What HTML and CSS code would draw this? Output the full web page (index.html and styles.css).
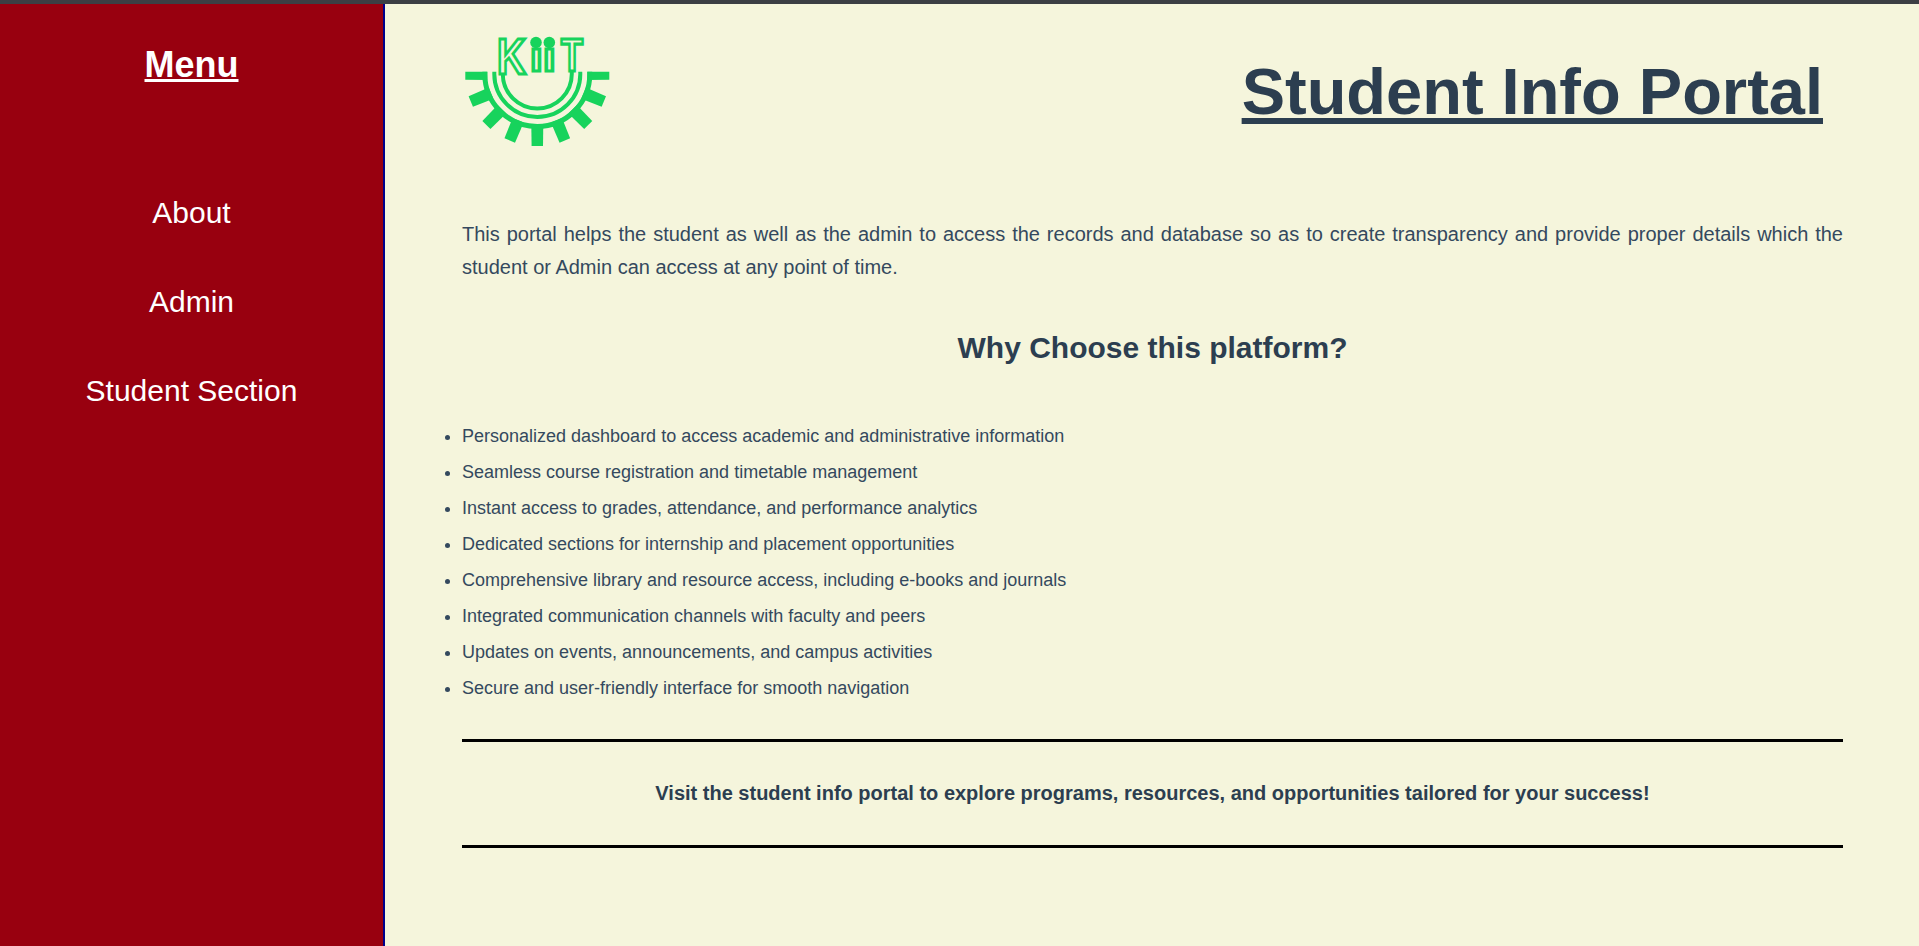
FILE: index.html
```html
<!DOCTYPE html>
<html lang="en">
<head>
<meta charset="utf-8">
<title>Student Info Portal</title>
<link rel="stylesheet" href="styles.css">
</head>
<body>
<div class="page">
  <aside class="sidebar">
    <h2 class="menu-title">Menu</h2>
    <nav class="menu">
      <a href="#about">About</a>
      <a href="#admin">Admin</a>
      <a href="#student">Student Section</a>
    </nav>
  </aside>
  <main class="content">
    <header class="masthead">
      <svg class="logo" viewBox="0 0 150 120" role="img" aria-label="KIIT logo">
        <defs><clipPath id="lower"><rect x="0" y="41.7" width="150" height="80"/></clipPath></defs>
        <g clip-path="url(#lower)" fill="none" stroke="#17d35c">
          <circle cx="75.3" cy="44" r="34.5" stroke-width="4"/>
          <circle cx="75.3" cy="44" r="43" stroke-width="4"/>
          <circle cx="75.3" cy="44" r="52.5" stroke-width="5"/>
          <g fill="#17d35c" stroke="none">
            <polygon id="t" points="69.3,94 81.3,94 81,116 69.6,116"/>
            <use href="#t" transform="rotate(22.5 75.3 44)"/>
            <use href="#t" transform="rotate(45 75.3 44)"/>
            <use href="#t" transform="rotate(67.5 75.3 44)"/>
            <use href="#t" transform="rotate(90 75.3 44)"/>
            <use href="#t" transform="rotate(-22.5 75.3 44)"/>
            <use href="#t" transform="rotate(-45 75.3 44)"/>
            <use href="#t" transform="rotate(-67.5 75.3 44)"/>
            <use href="#t" transform="rotate(-90 75.3 44)"/>
          </g>
        </g>
        <text class="logo-k" transform="translate(35 43.5) scale(.8 1)">K</text>
        <text class="logo-i" transform="translate(68 41.2) scale(1.13 1)">ı</text>
        <text class="logo-i" transform="translate(81 41.2) scale(1.13 1)">ı</text>
        <text class="logo-t" transform="translate(99 41.2) scale(.78 1)">T</text>
        <circle cx="74" cy="12.5" r="5.8" fill="#17d35c"/>
        <circle cx="87.3" cy="12.5" r="5.8" fill="#17d35c"/>
      </svg>
      <h1 class="title">Student Info Portal</h1>
    </header>
    <p class="intro">This portal helps the student as well as the admin to access the records and database so as to create transparency and provide proper details which the student or Admin can access at any point of time.</p>
    <h2 class="subtitle">Why Choose this platform?</h2>
    <ul class="features">
      <li>Personalized dashboard to access academic and administrative information</li>
      <li>Seamless course registration and timetable management</li>
      <li>Instant access to grades, attendance, and performance analytics</li>
      <li>Dedicated sections for internship and placement opportunities</li>
      <li>Comprehensive library and resource access, including e-books and journals</li>
      <li>Integrated communication channels with faculty and peers</li>
      <li>Updates on events, announcements, and campus activities</li>
      <li>Secure and user-friendly interface for smooth navigation</li>
    </ul>
    <hr class="rule">
    <p class="cta">Visit the student info portal to explore programs, resources, and opportunities tailored for your success!</p>
    <hr class="rule">
  </main>
</div>
</body>
</html>
```
FILE: styles.css
```css
* { box-sizing: border-box; }
html, body { margin: 0; height: 100%; }
body {
  font-family: "Liberation Sans", Arial, sans-serif;
  background: #f5f5dc;
  color: #2c3e50;
  overflow: hidden;
}
.page {
  display: flex;
  height: 946px;
  border-top: 4px solid #3c3f44;
}
.sidebar {
  width: 385px;
  flex: none;
  background: #98000f;
  border-right: 2px solid #00008b;
  color: #fff;
  text-align: center;
  padding-top: 41px;
}
.menu-title {
  margin: 0;
  font-size: 36px;
  line-height: 40px;
  font-weight: 700;
  text-decoration: underline;
}
.menu {
  display: flex;
  flex-direction: column;
  gap: 55px;
  margin-top: 111px;
}
.menu a {
  color: #fff;
  text-decoration: none;
  font-size: 30px;
  line-height: 34px;
}
.content {
  flex: 1;
  padding: 0 76px 0 77px;
}
.masthead {
  display: flex;
  justify-content: space-between;
  align-items: flex-start;
  height: 200px;
  padding-right: 20px;
}
.logo {
  width: 150px;
  height: 120px;
  margin-top: 26px;
  flex: none;
  overflow: visible;
}
.logo text {
  font-family: "Liberation Sans", Arial, sans-serif;
  font-weight: 700;
  fill: #f5f5dc;
  stroke: #17d35c;
  stroke-width: 3.2;
}
.logo .logo-k { font-size: 50px; }
.logo .logo-i { font-size: 40px; }
.logo .logo-t { font-size: 46px; }
.title {
  margin: 48px 0 0;
  font-size: 65px;
  line-height: 80px;
  font-weight: 700;
  text-decoration: underline;
}
.intro {
  margin: 14px 0 0;
  font-size: 20px;
  line-height: 33px;
  text-align: justify;
  color: #34495e;
}
.subtitle {
  margin: 47px 0 0;
  font-size: 30px;
  line-height: 34px;
  text-align: center;
  font-weight: 700;
}
.features {
  margin: 53px 0 0;
  padding: 0;
  font-size: 18px;
  color: #34495e;
}
.features li {
  line-height: 36px;
}
.rule {
  margin: 0;
  height: 3px;
  border: 0;
  background: #000;
}
.features + .rule { margin-top: 33px; }
.cta {
  margin: 0;
  height: 103px;
  padding-top: 39px;
  line-height: 24px;
  font-size: 20px;
  font-weight: 700;
  text-align: center;
}
```
